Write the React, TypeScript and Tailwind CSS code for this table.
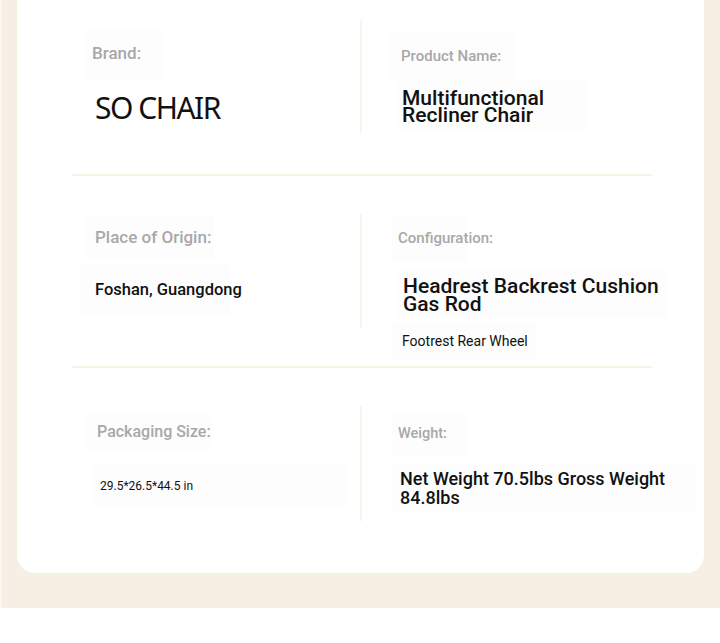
export default function App() {
    const roboto = { fontFamily: "Roboto, 'Liberation Sans', sans-serif" };

    return (
        <div className="min-h-[643px] w-full bg-white" style={roboto}>
            <div className="h-[608px] border-l-2 border-[#faf7f1] bg-[#f6efe3] pl-[15px] pr-[16px] pb-[35px]">
                <div className="h-full rounded-b-[18px] bg-white">
                    {/* row 1 */}
                    <div className="ml-[55px] flex h-[174px] items-start pt-[20px]">
                        <div className="flex w-[288px] flex-col pl-[12px]">
                            <div className="mt-[8px] flex h-[52px] w-[79px] items-center bg-[#fdfdfd] pl-[8px] text-[17px] font-medium text-[#a8a8a8]">
                                Brand:
                            </div>
                            <div
                                className="flex h-[54px] items-center pl-[11px] text-[30px] tracking-[-1.5px] text-[#111]"
                                style={{ fontFamily: "'Noto Sans', 'Open Sans', sans-serif" }}
                            >
                                SO CHAIR
                            </div>
                        </div>
                        <div className="h-[113px] w-[2px] bg-[#faf4ea]" />
                        <div className="flex flex-col">
                            <div className="ml-[27px] mt-[12px] flex h-[48px] w-[126px] items-center bg-[#fdfdfd] pl-[12px] text-[15px] font-medium text-[#a8a8a8]">
                                Product Name:
                            </div>
                            <div className="ml-[35px] flex h-[50px] w-[191px] flex-col justify-center bg-[#fdfdfd] pl-[5px] pt-[3px] text-[21px] font-medium leading-[17px] text-[#111]">
                                Multifunctional Recliner Chair
                            </div>
                        </div>
                    </div>
                    <div className="ml-[55px] h-[2px] w-[580px] bg-[#f8f1e5]" />

                    {/* row 2 */}
                    <div className="ml-[55px] flex h-[190px] items-start pt-[38px]">
                        <div className="flex w-[288px] flex-col pl-[12px]">
                            <div className="mt-[2px] flex h-[44px] w-[130px] items-center bg-[#fdfdfd] pl-[11px] text-[17px] font-medium whitespace-nowrap text-[#a8a8a8]">
                                Place of Origin:
                            </div>
                            <div className="-ml-[4px] mt-[5px] flex h-[50px] w-[150px] items-center bg-[#fdfdfd] pl-[15px] text-[16.5px] font-medium whitespace-nowrap text-[#111]">
                                Foshan, Guangdong
                            </div>
                        </div>
                        <div className="h-[114px] w-[2px] bg-[#faf4ea]" />
                        <div className="flex flex-col">
                            <div className="ml-[30px] mt-[1px] flex h-[47px] w-[76px] items-center bg-[#fdfdfd] pl-[6px] text-[15px] font-medium whitespace-nowrap text-[#a8a8a8]">
                                Configuration:
                            </div>
                            <div className="ml-[34px] mt-[8px] flex h-[48px] w-[271px] flex-col justify-center bg-[#fdfdfd] pl-[7px] pt-[2px] text-[21px] font-medium leading-[18px] text-[#111]">
                                Headrest Backrest Cushion Gas Rod
                            </div>
                            <div className="ml-[30px] mt-[4px] flex h-[38px] w-[143px] items-center bg-[#fdfdfd] pl-[10px] text-[14px] whitespace-nowrap text-[#111]">
                                Footrest Rear Wheel
                            </div>
                        </div>
                    </div>
                    <div className="ml-[55px] h-[2px] w-[580px] bg-[#f8f1e5]" />

                    {/* row 3 */}
                    <div className="ml-[55px] flex items-start pt-[38px]">
                        <div className="flex w-[288px] flex-col pl-[12px]">
                            <div className="mt-[6px] flex h-[40px] w-[128px] items-center bg-[#fdfdfd] pl-[13px] text-[16px] font-medium whitespace-nowrap text-[#a8a8a8]">
                                Packaging Size:
                            </div>
                            <div className="ml-[8px] mt-[13px] flex h-[42px] w-[255px] items-center bg-[#fdfdfd] pl-[8px] text-[12px] text-[#111]">
                                29.5*26.5*44.5 in
                            </div>
                        </div>
                        <div className="h-[115px] w-[2px] bg-[#faf4ea]" />
                        <div className="flex flex-col">
                            <div className="ml-[30px] mt-[6px] flex h-[43px] w-[75px] items-center bg-[#fdfdfd] pl-[6px] text-[14.5px] font-medium text-[#a8a8a8]">
                                Weight:
                            </div>
                            <div className="ml-[30px] mt-[10px] flex h-[47px] w-[305px] flex-col justify-center bg-[#fdfdfd] pl-[8px] pb-[2px] text-[18px] font-medium leading-[19px] text-[#111]">
                                Net Weight 70.5lbs Gross Weight 84.8lbs
                            </div>
                        </div>
                    </div>
                </div>
            </div>
        </div>
    );
}
